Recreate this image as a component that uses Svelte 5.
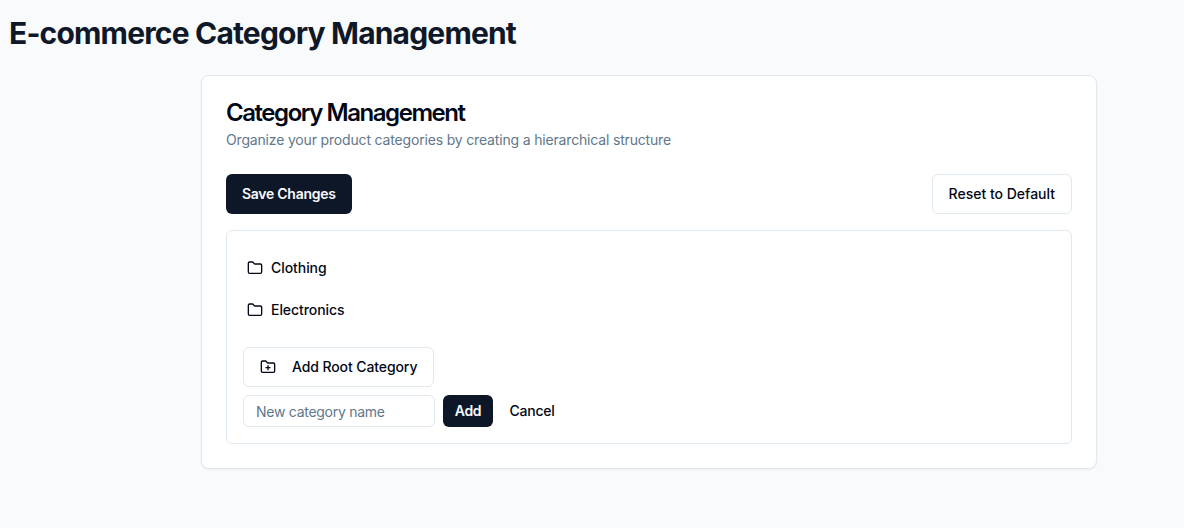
<script>
  const categories = ['Clothing', 'Electronics'];
  let name = $state('');
</script>

<main>
  <h1>E-commerce Category Management</h1>
  <section class="card">
    <header>
      <h2>Category Management</h2>
      <p>Organize your product categories by creating a hierarchical structure</p>
    </header>
    <div class="toolbar">
      <button class="primary">Save Changes</button>
      <button class="outline reset">Reset to Default</button>
    </div>
    <div class="tree">
      <ul>
        {#each categories as category}
          <li>
            <svg viewBox="0 0 24 24"><path d="M20 20a2 2 0 0 0 2-2V8a2 2 0 0 0-2-2h-7.9a2 2 0 0 1-1.69-.9L9.6 3.9A2 2 0 0 0 7.93 3H4a2 2 0 0 0-2 2v13a2 2 0 0 0 2 2Z" /></svg>
            <span>{category}</span>
          </li>
        {/each}
      </ul>
      <button class="outline root">
        <svg viewBox="0 0 24 24"><path d="M12 10v6M9 13h6" /><path d="M20 20a2 2 0 0 0 2-2V8a2 2 0 0 0-2-2h-7.9a2 2 0 0 1-1.69-.9L9.6 3.9A2 2 0 0 0 7.93 3H4a2 2 0 0 0-2 2v13a2 2 0 0 0 2 2Z" /></svg>
        <span>Add Root Category</span>
      </button>
      <div class="form">
        <input placeholder="New category name" bind:value={name} />
        <button class="primary small">Add</button>
        <button class="ghost small">Cancel</button>
      </div>
    </div>
  </section>
</main>

<style>
  :global(body) {
    background: #f9fafc;
    font-family: Inter, sans-serif;
    color: #020817;
  }
  main {
    box-sizing: border-box;
    min-height: 528px;
    padding: 15px 0 0 9px;
  }
  h1, h2, p, ul { margin: 0; padding: 0; }
  h1 {
    font-size: 30px;
    line-height: 36px;
    font-weight: 700;
    letter-spacing: -0.82px;
    color: #0f1828;
  }
  .card {
    box-sizing: border-box;
    width: 896px;
    margin: 24px 0 0 192px;
    padding: 24px;
    background: #fff;
    border: 1px solid #e0e8ef;
    border-radius: 8px;
    box-shadow: 0 1px 2px rgba(0, 0, 0, 0.05);
  }
  header { display: flex; flex-direction: column; gap: 5px; }
  h2 {
    padding-top: 1px;
    font-size: 24px;
    line-height: 24px;
    font-weight: 600;
    letter-spacing: -1.45px;
  }
  p { font-size: 14px; line-height: 20px; letter-spacing: -0.17px; color: #61778a; }
  .toolbar { display: flex; justify-content: space-between; margin: 24px 0 16px; }
  button {
    box-sizing: border-box;
    display: inline-flex;
    align-items: center;
    justify-content: center;
    height: 40px;
    padding: 0 16px;
    border: 0;
    border-radius: 6px;
    font: 500 14px/20px Inter, sans-serif;
    letter-spacing: -0.1px;
    white-space: nowrap;
    color: #020817;
    background: #fff;
  }
  .primary { background: #0d1728; color: #f8fafc; font-weight: 600; letter-spacing: -0.27px; }
  .outline { border: 1px solid #e0e8ef; }
  .reset { letter-spacing: 0; }
  .tree {
    padding: 16px;
    border: 1px solid #e0e8ef;
    border-radius: 6px;
  }
  ul { list-style: none; margin-bottom: 16px; }
  li {
    display: flex;
    align-items: center;
    gap: 8px;
    height: 42px;
    padding-left: 4px;
    font-size: 14px;
    line-height: 20px;
    font-weight: 500;
    letter-spacing: -0.06px;
  }
  li span { padding-bottom: 1px; }
  svg {
    flex: none;
    width: 16px;
    height: 16px;
    fill: none;
    stroke: currentColor;
    stroke-width: 2;
    stroke-linecap: round;
    stroke-linejoin: round;
  }
  .root { gap: 16px; width: 191px; justify-content: flex-start; }
  .form { display: flex; gap: 8px; margin-top: 8px; }
  input {
    box-sizing: border-box;
    width: 192px;
    height: 32px;
    padding: 0 12px;
    border: 1px solid #e0e8ef;
    border-radius: 6px;
    font: 14px/20px Inter, sans-serif;
    letter-spacing: -0.27px;
  }
  input::placeholder { color: #61778a; opacity: 1; }
  .small { height: 32px; padding: 0 12px; }
  .primary.small { width: 50px; }
  .ghost { padding: 0 8.4px; letter-spacing: -0.2px; }
</style>
